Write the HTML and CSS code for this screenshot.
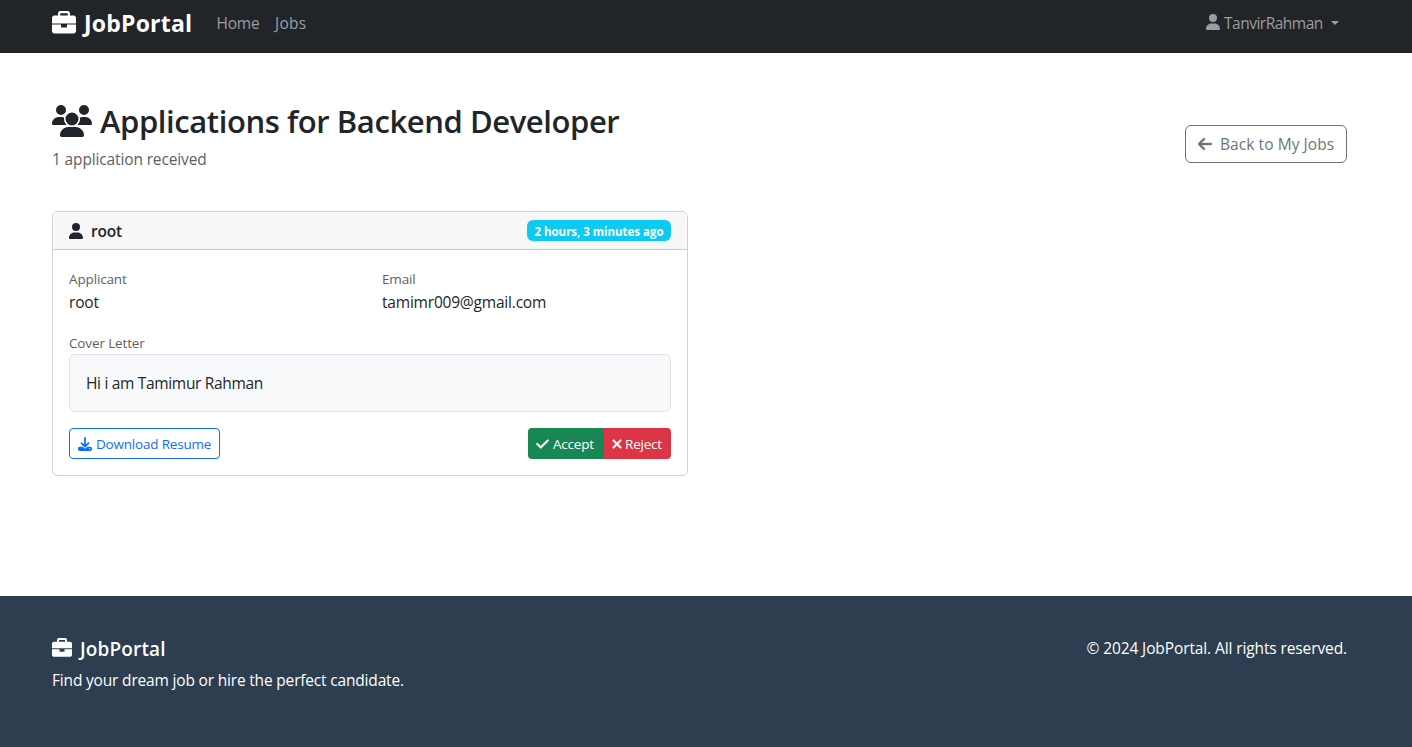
FILE: index.html
```html
<!DOCTYPE html>
<html lang="en">
<head>
<meta charset="utf-8">
<title>Applications - JobPortal</title>
<link rel="stylesheet" href="styles.css">
</head>
<body>
<svg class="defs" width="0" height="0">
  <symbol id="briefcase" viewBox="0 0 512 512"><path d="M320 336c0 8.844-7.156 16-16 16h-96C199.200 352 192 344.800 192 336V288H0v144C0 457.600 22.410 480 48 480h416c25.590 0 48-22.410 48-48V288h-192V336zM464 96H384V48C384 22.410 361.600 0 336 0h-160C150.400 0 128 22.410 128 48V96H48C22.410 96 0 118.400 0 144V264h512V144C512 118.400 489.600 96 464 96zM336 96h-160V48h160V96z"/></symbol>
  <symbol id="user" viewBox="0 0 448 512"><path d="M224 256A128 128 0 1 0 224 0a128 128 0 1 0 0 256zM274.700 304H173.300C77.610 304 0 381.600 0 477.300c0 19.140 15.520 34.670 34.660 34.670h378.700C432.500 512 448 496.500 448 477.300C448 381.600 370.400 304 274.700 304z"/></symbol>
  <symbol id="users" viewBox="0 0 640 512"><path d="M144 0a80 80 0 1 1 0 160A80 80 0 1 1 144 0zM512 0a80 80 0 1 1 0 160A80 80 0 1 1 512 0zM0 298.700C0 239.800 47.800 192 106.700 192h42.700c15.900 0 31 3.500 44.600 9.700c-1.300 7.200-1.900 14.700-1.900 22.300c0 38.200 16.800 72.500 43.300 96H21.300C9.600 320 0 310.400 0 298.700zM405.300 320c26.600-23.500 43.300-57.800 43.300-96c0-7.600-.7-15-1.900-22.300c13.600-6.300 28.700-9.700 44.600-9.700h42.700C592.200 192 640 239.800 640 298.700c0 11.800-9.600 21.300-21.300 21.300H405.300zM216 224a104 104 0 1 1 208 0 104 104 0 1 1 -208 0zM128 485.300C128 411.700 187.700 352 261.300 352H378.700C452.300 352 512 411.700 512 485.300c0 14.700-11.900 26.700-26.700 26.700H154.700c-14.700 0-26.700-11.900-26.700-26.700z"/></symbol>
  <symbol id="arrow-left" viewBox="0 0 448 512"><path d="M9.400 233.400c-12.500 12.500-12.500 32.800 0 45.300l160 160c12.500 12.500 32.800 12.500 45.300 0s12.500-32.800 0-45.300L109.200 288 416 288c17.700 0 32-14.300 32-32s-14.300-32-32-32l-306.700 0L214.600 118.600c12.500-12.500 12.500-32.800 0-45.300s-32.800-12.500-45.300 0l-160 160z"/></symbol>
  <symbol id="download" viewBox="0 0 512 512"><path d="M288 32c0-17.700-14.300-32-32-32s-32 14.300-32 32V274.700l-73.400-73.400c-12.500-12.500-32.800-12.500-45.300 0s-12.500 32.800 0 45.300l128 128c12.500 12.500 32.800 12.500 45.300 0l128-128c12.500-12.500 12.500-32.800 0-45.300s-32.800-12.500-45.300 0L288 274.700V32zM64 352c-35.300 0-64 28.700-64 64v32c0 35.300 28.700 64 64 64H448c35.300 0 64-28.700 64-64V416c0-35.300-28.700-64-64-64H346.500l-45.300 45.300c-25 25-65.500 25-90.500 0L165.500 352H64zm368 56a24 24 0 1 1 0 48 24 24 0 1 1 0-48z"/></symbol>
  <symbol id="check" viewBox="0 0 448 512"><path d="M438.600 105.400c12.500 12.500 12.500 32.800 0 45.300l-256 256c-12.500 12.500-32.800 12.500-45.300 0l-128-128c-12.500-12.500-12.500-32.800 0-45.300s32.800-12.500 45.300 0L160 338.700 393.400 105.400c12.500-12.500 32.800-12.500 45.300 0z"/></symbol>
  <symbol id="xmark" viewBox="0 0 320 512"><path d="M310.600 150.600c12.500-12.500 12.500-32.800 0-45.300s-32.800-12.500-45.300 0L160 210.700 54.600 105.400c-12.500-12.500-32.800-12.500-45.300 0s-12.500 32.800 0 45.300L114.700 256 9.400 361.400c-12.500 12.500-12.500 32.800 0 45.300s32.800 12.500 45.300 0L160 301.300 265.400 406.600c12.500 12.500 32.800 12.500 45.300 0s12.500-32.800 0-45.300L205.300 256 310.600 150.600z"/></symbol>
</svg>

<nav class="navbar">
  <a class="brand"><svg class="brand-icon"><use href="#briefcase"/></svg><span class="brand-name">JobPortal</span></a>
  <a class="nav-link home">Home</a>
  <a class="nav-link jobs">Jobs</a>
  <a class="nav-link account"><svg class="account-icon"><use href="#user"/></svg><span class="account-name">TanvirRahman</span><span class="caret"></span></a>
</nav>

<main class="main">
  <header class="page-head">
    <div class="heading">
      <h1 class="title"><svg class="title-icon"><use href="#users"/></svg><span class="title-text">Applications for Backend Developer</span></h1>
      <p class="subtitle">1 application received</p>
    </div>
    <a class="back"><svg class="back-icon"><use href="#arrow-left"/></svg><span class="back-text">Back to My Jobs</span></a>
  </header>

  <section class="card">
    <div class="card-header">
      <svg class="card-icon"><use href="#user"/></svg>
      <h2 class="card-title">root</h2>
      <span class="badge">2 hours, 3 minutes ago</span>
    </div>
    <div class="card-body">
      <div class="fields">
        <div><div class="label">Applicant</div><div class="value">root</div></div>
        <div><div class="label">Email</div><div class="value">tamimr009@gmail.com</div></div>
      </div>
      <div class="label">Cover Letter</div>
      <div class="letter">Hi i am Tamimur Rahman</div>
      <div class="actions">
        <a class="download"><svg class="small-icon"><use href="#download"/></svg><span>Download Resume</span></a>
        <div class="group">
          <button class="accept"><svg class="check-icon"><use href="#check"/></svg><span>Accept</span></button>
          <button class="reject"><svg class="x-icon"><use href="#xmark"/></svg><span>Reject</span></button>
        </div>
      </div>
    </div>
  </section>
</main>

<footer class="footer">
  <div>
    <h3 class="footer-brand"><svg class="footer-icon"><use href="#briefcase"/></svg><span class="footer-name">JobPortal</span></h3>
    <p class="tagline">Find your dream job or hire the perfect candidate.</p>
  </div>
  <p class="copyright">© 2024 JobPortal. All rights reserved.</p>
</footer>
</body>
</html>
```
FILE: styles.css
```css
* { box-sizing: border-box; }
body {
  margin: 0;
  min-height: 747px;
  display: flex;
  flex-direction: column;
  background: #fff;
  color: #212529;
  font: 400 15.500px/24px "Open Sans", "Noto Sans", sans-serif;
  letter-spacing: -0.2px;
  white-space: nowrap;
  overflow: hidden;
}
h1, h2, h3, p { margin: 0; }
svg { display: block; flex: none; fill: currentColor; }
.defs { position: absolute; }

.navbar {
  display: flex;
  align-items: center;
  height: 53px;
  padding: 0 73px 8px 52px;
  background: #212529;
}
.brand { display: flex; align-items: center; gap: 8px; width: 164.500px; color: #fff; }
.brand-icon { width: 24px; height: 24px; }
.brand-name { padding-top: 1px; font-size: 23px; font-weight: 700; line-height: 30px; letter-spacing: 0.2px; }
.nav-link { color: #9b9d9e; }
.home { width: 58.500px; }
.jobs { letter-spacing: 0.3px; }
.account { display: flex; align-items: center; margin-left: auto; }
.account-icon { width: 14px; height: 16px; margin: -1px 4px 0 0; }
.account-name { width: 107px; letter-spacing: -0.5px; }
.caret { width: 8px; border: 4px solid transparent; border-top-color: currentColor; border-bottom: 0; }

.main { flex: 1; padding: 48px 65px 0 52px; }
.page-head { display: flex; justify-content: space-between; align-items: center; height: 86px; }
.heading { align-self: flex-start; }
.title { display: flex; align-items: center; gap: 8px; height: 40px; margin-bottom: 6px; font-size: 31px; font-weight: 600; line-height: 38px; letter-spacing: -0.42px; }
.title-icon { width: 40px; height: 32px; }
.subtitle { color: #5d6166; letter-spacing: -0.14px; }
.back { display: flex; align-items: center; gap: 8px; width: 162px; height: 38px; padding: 0 12px; border: 1px solid #6c757d; border-radius: 6px; color: #6c757d; letter-spacing: 0.07px; }
.back-icon { width: 14px; height: 16px; stroke: currentColor; stroke-width: 12px; }

.card { width: 636px; height: 265px; margin-top: 24px; border: 1px solid #d0d1d2; border-radius: 6px; overflow: hidden; }
.card-header { display: flex; align-items: center; height: 38px; padding: 0 16px; background: #f7f7f7; border-bottom: 1px solid #c8c9ca; }
.card-icon { width: 14px; height: 16px; margin-right: 8px; }
.card-title { font-size: 15.500px; font-weight: 600; line-height: 24px; }
.badge { display: flex; align-items: center; justify-content: center; width: 144px; height: 21px; padding-top: 2px; margin-left: auto; background: #0dcaf0; border-radius: 6px; color: #fff; font-size: 11.500px; font-weight: 700; letter-spacing: -0.02px; }
.card-body { padding: 19px 16px 16px; }
.fields { display: grid; grid-template-columns: 313px 1fr; margin-bottom: 19px; }
.label { height: 21px; color: #5d6166; font-size: 13.500px; line-height: 21px; letter-spacing: -0.14px; }
.value { height: 24px; }
.letter { height: 58px; padding: 16px; background: #f8f9fa; border: 1px solid #dee2e6; border-radius: 6px; letter-spacing: -0.32px; }
.actions { display: flex; justify-content: space-between; height: 31px; margin-top: 16px; font-size: 13.500px; line-height: 21px; }
.actions span { padding-top: 1px; }
.download { display: flex; align-items: center; gap: 4px; width: 151px; padding: 0 8px; border: 1px solid #0d6efd; border-radius: 4px; color: #0d6efd; }
.small-icon { width: 14px; height: 14px; }
.group { display: flex; border-radius: 4px; overflow: hidden; }
.accept, .reject { display: flex; align-items: center; border: 0; padding: 0 8px; color: #fff; font: inherit; letter-spacing: inherit; }
.accept { width: 76px; gap: 4px; background: #198754; }
.reject { width: 67px; gap: 3px; background: #dc3545; }
.check-icon, .x-icon { stroke: currentColor; stroke-width: 20px; }
.check-icon { width: 13px; height: 14px; }
.x-icon { width: 10px; height: 14px; }

.footer { display: flex; justify-content: space-between; height: 151px; padding: 40px 65px 0 52px; background: #2c3e50; color: #fff; }
.footer-brand { display: flex; align-items: center; gap: 8px; height: 24px; margin-bottom: 8px; font-size: 19px; font-weight: 600; letter-spacing: 0.14px; }
.footer-icon { width: 20px; height: 20px; }
.footer-name { padding-top: 2px; }
.tagline { letter-spacing: -0.18px; }
.copyright { letter-spacing: -0.11px; }
```
